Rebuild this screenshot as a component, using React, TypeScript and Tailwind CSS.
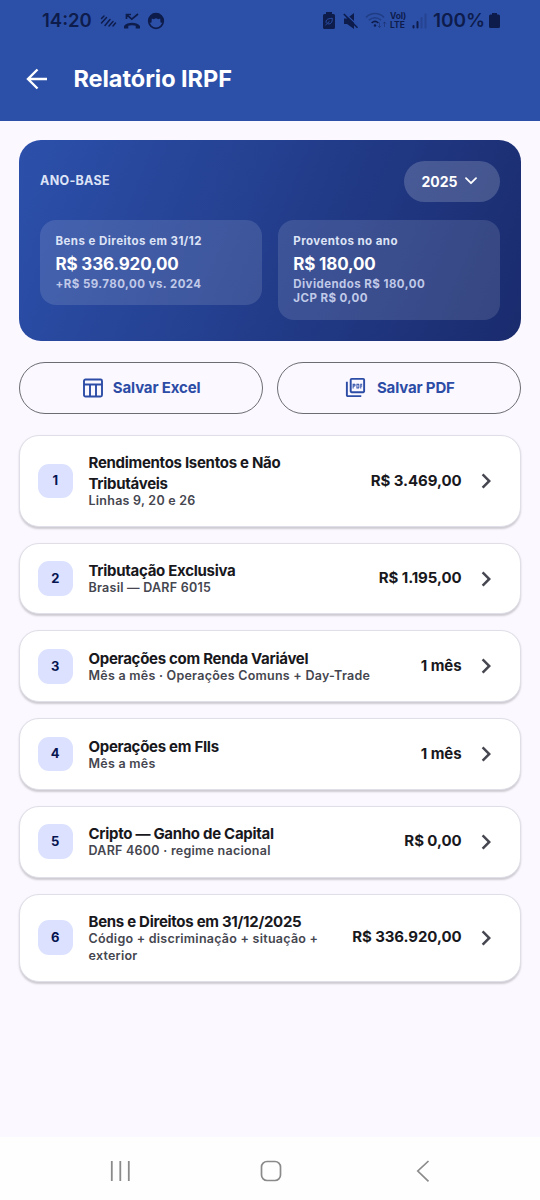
import { ReactNode } from 'react';
import { MdChevronRight, MdOutlinePictureAsPdf } from 'react-icons/md';

interface Section {
  id: number;
  title: string;
  subtitle: string;
  value: string;
}

const sections: Section[] = [
  { id: 1, title: 'Rendimentos Isentos e Não Tributáveis', subtitle: 'Linhas 9, 20 e 26', value: 'R$ 3.469,00' },
  { id: 2, title: 'Tributação Exclusiva', subtitle: 'Brasil — DARF 6015', value: 'R$ 1.195,00' },
  { id: 3, title: 'Operações com Renda Variável', subtitle: 'Mês a mês · Operações Comuns + Day-Trade', value: '1 mês' },
  { id: 4, title: 'Operações em FIIs', subtitle: 'Mês a mês', value: '1 mês' },
  { id: 5, title: 'Cripto — Ganho de Capital', subtitle: 'DARF 4600 · regime nacional', value: 'R$ 0,00' },
  { id: 6, title: 'Bens e Direitos em 31/12/2025', subtitle: 'Código + discriminação + situação + exterior', value: 'R$ 336.920,00' },
];

//Phone status bar: clock, notifications, signal and battery
function StatusBar() {
  return (
    <div className="flex h-[41px] items-center justify-between pl-[42px] pr-[40px] text-[#0e1c4c]">
      <div className="flex items-center">
        <span className="w-[50px] text-[18.5px] font-semibold whitespace-nowrap">14:20</span>
        <svg className="ml-2" width="17" height="16" viewBox="0 0 17 16" fill="none" stroke="currentColor" strokeWidth="1.5" strokeLinecap="round">
          <path d="M1.5 5.5 4 3M1.5 10 6.5 4.5M5 12.5 10 6.5M9 13 13 8.5M13 13 15.5 10" />
        </svg>
        <svg className="ml-[6px]" width="18" height="18" viewBox="0 0 18 18" fill="none" stroke="currentColor" strokeWidth="1.7">
          <path d="M3.5 7V2.5H8M3.8 2.8 8.8 7.2 15 2" />
          <path d="M1 16.5v-2.6C4.5 9.7 13.5 9.7 17 13.9v2.6h-4.3v-2.7c-2-.8-5.4-.8-7.4 0v2.7Z" fill="currentColor" stroke="none" />
        </svg>
        <svg className="ml-[6px]" width="18" height="18" viewBox="0 0 18 18" fill="none" stroke="currentColor" strokeWidth="1.7">
          <circle cx="9" cy="9" r="7.3" />
          <path d="M1.5 7C3.5-.5 14.5-.5 16.5 7l-1 4-2-.5-.3-4-1.7.7L9 6.3l-2.5.9-1.7-.7-.3 4-2 .5Z" fill="currentColor" stroke="none" />
        </svg>
      </div>

      <div className="flex items-center">
        <svg width="12" height="17" viewBox="0 0 12 17">
          <path d="M3 0h6v2h1.5A1.5 1.5 0 0 1 12 3.5V15.5A1.5 1.5 0 0 1 10.5 17h-9A1.5 1.5 0 0 1 0 15.5v-12A1.5 1.5 0 0 1 1.5 2H3Z" fill="currentColor" />
          <path d="M3.2 10.8C2.5 7.5 5 6.5 9.3 6.3c.2 3.7-1.3 6.2-4.6 5.5M2.5 13 6.5 9.3" fill="none" stroke="#2c50a8" strokeWidth="1" />
        </svg>
        <svg className="ml-[8px]" width="16" height="16" viewBox="0 0 16 16" fill="currentColor">
          <path d="M1 5.5h3L11 0v16l-7-5H1Z" />
          <path d="M1.5 0 15.5 13" stroke="#2c50a8" strokeWidth="1.2" />
          <path d="M.8 1 14.5 14.8" stroke="currentColor" strokeWidth="1.6" />
        </svg>
        <svg className="ml-[6px]" width="22" height="17" viewBox="0 0 22 17" fill="none" stroke="currentColor" strokeWidth="1.5">
          <path d="M1 5.5C6 .3 14 .3 19 5.5M3.8 8.3c3.6-3.5 8.8-3.5 12.4 0" opacity=".38" />
          <path d="M6.6 11c2-1.9 4.8-1.9 6.8 0" />
          <circle cx="10" cy="13.5" r="1.2" fill="currentColor" stroke="none" />
          <path d="M14.5 10.5v5m-1.7-1.7 1.7 1.7 1.7-1.7M19.5 15v-5m-1.7 1.7 1.7-1.7 1.7 1.7" strokeWidth="1" opacity=".4" />
        </svg>
        <div className="ml-[3px] flex w-[16px] flex-col text-[8.5px] leading-[9px] font-bold whitespace-nowrap">
          <span className="tracking-[-0.2px]">Vol)</span>
          <span>LTE</span>
        </div>
        <svg className="ml-[6px]" width="15" height="16" viewBox="0 0 15 16" fill="currentColor">
          <rect x="0.5" y="12" width="2" height="3.5" rx="1" />
          <rect x="4.5" y="8" width="2" height="7.5" rx="1" />
          <rect x="8.5" y="4" width="2" height="11.5" rx="1" opacity=".25" />
          <rect x="12.5" y="0.5" width="2" height="15" rx="1" opacity=".25" />
        </svg>
        <span className="ml-[6px] w-[54px] pt-px text-[19px] font-semibold whitespace-nowrap">100%</span>
        <svg className="ml-[2px]" width="11" height="15" viewBox="0 0 11 15" fill="currentColor">
          <path d="M3 0h5v1.5h1.5A1.5 1.5 0 0 1 11 3v10.5A1.5 1.5 0 0 1 9.5 15h-8A1.5 1.5 0 0 1 0 13.5V3a1.5 1.5 0 0 1 1.5-1.5H3Z" />
        </svg>
      </div>
    </div>
  );
}

function Header() {
  return (
    <header className="h-[121px] bg-[#2c50a8]">
      <StatusBar />
      <div className="flex h-[76px] items-center pl-[26px] text-white">
        <svg width="22" height="22" viewBox="0 0 22 22" fill="none" stroke="currentColor" strokeWidth="2.4">
          <path d="M21 11H2.5M11.5 1.5 2 11l9.5 9.5" />
        </svg>
        <h1 className="ml-[25.5px] text-[23.5px] font-bold tracking-[-0.05px]">Relatório IRPF</h1>
      </div>
    </header>
  );
}

interface SummaryBoxProps {
  label: string;
  value: string;
  children: ReactNode;
}

function SummaryBox({ label, value, children }: SummaryBoxProps) {
  return (
    <div className="flex-1 rounded-2xl bg-white/12 px-[15.5px] pt-[14px] pb-[14px] font-bold">
      <div className="text-[11.5px] leading-[15px] tracking-[0.45px] text-[#dde3f6]">{label}</div>
      <div className="mt-[4px] text-[17px] leading-[23px] tracking-[-0.15px] text-white">{value}</div>
      <div className="mt-[1px] text-[11.5px] leading-[14.3px] tracking-[0.45px] text-[#c0c9e8]">{children}</div>
    </div>
  );
}

function SummaryCard() {
  return (
    <section className="h-[201px] rounded-[22px] bg-linear-[112deg] from-[#2c50ab] to-[#1a2b6d] px-[21px] pt-[21px]">
      <div className="flex items-center justify-between">
        <span className="text-[12.5px] font-bold tracking-[0.3px] text-[#dde3f6]">ANO-BASE</span>
        <button className="flex h-[41px] w-[96px] items-center rounded-full bg-white/18 pl-[17.5px] text-[14px] font-bold text-white">
          <span className="w-[36px]">2025</span>
          <svg className="ml-[7px]" width="12" height="8" viewBox="0 0 12 8" fill="none" stroke="currentColor" strokeWidth="1.8" strokeLinecap="round" strokeLinejoin="round">
            <path d="m1 1.2 5 5 5-5" />
          </svg>
        </button>
      </div>
      <div className="mt-[18.5px] flex items-start gap-[15.5px]">
        <SummaryBox label="Bens e Direitos em 31/12" value="R$ 336.920,00">
          +R$ 59.780,00 vs. 2024
        </SummaryBox>
        <SummaryBox label="Proventos no ano" value="R$ 180,00">
          Dividendos R$ 180,00
          <br />
          JCP R$ 0,00
        </SummaryBox>
      </div>
    </section>
  );
}

function TableIcon() {
  return (
    <svg width="20" height="20" viewBox="0 0 20 20" fill="none" stroke="currentColor" strokeWidth="1.9">
      <rect x="1" y="1.5" width="18" height="17" rx="1.5" />
      <path d="M1 6.5h18M7 6.5v12M13 6.5v12" />
    </svg>
  );
}

function ExportButton({ icon, label }: { icon: ReactNode; label: string }) {
  return (
    <button className="flex h-[52px] flex-1 items-center justify-center gap-[10px] rounded-full border border-[#6c6c74] pl-px text-[15px] font-bold tracking-[-0.15px] text-[#2c4ca6]">
      {icon}
      <span className="pt-px">{label}</span>
    </button>
  );
}

function SectionCard({ section }: { section: Section }) {
  return (
    <li className="flex min-h-[71.7px] items-center rounded-[20px] border border-[#e0dfe8] bg-white py-[17px] pr-[19px] pl-[18px] shadow-[0_1.5px_2px_rgba(0,0,0,0.18)]">
      <span className="flex size-[34.5px] shrink-0 items-center justify-center rounded-[11px] bg-[#dce1ff] text-[13px] font-bold text-[#06144f]">
        {section.id}
      </span>
      <div className="ml-[16px] min-w-0 flex-1">
        <h2 className="text-[15px] leading-[20.5px] font-bold tracking-[-0.29px] text-[#18181d]">{section.title}</h2>
        <p className="-mt-[2.5px] text-[12.5px] leading-[17px] font-semibold tracking-[0.25px] text-[#45464f]">{section.subtitle}</p>
      </div>
      <span className="ml-[28px] text-[15px] font-bold tracking-[-0.08px] whitespace-nowrap text-[#18181d]">{section.value}</span>
      <MdChevronRight className="ml-[9.5px] shrink-0 text-[#45464f]" size={30} />
    </li>
  );
}

//Android navigation buttons
function NavigationBar() {
  return (
    <nav className="flex h-[63px] items-center bg-[#fefefe] pt-[4px] pl-[110px] text-[#8a8a8a]">
      <svg width="21" height="22" viewBox="0 0 21 22" stroke="currentColor" strokeWidth="1.8">
        <path d="M1.8 1v20M10.3 1v20M18.8 1v20" />
      </svg>
      <svg className="ml-[129px]" width="22" height="22" viewBox="0 0 22 22" fill="none" stroke="currentColor" strokeWidth="1.7">
        <rect x="1.5" y="1.5" width="19" height="19" rx="5.5" />
      </svg>
      <svg className="ml-[134px]" width="14" height="22" viewBox="0 0 14 22" fill="none" stroke="currentColor" strokeWidth="1.7">
        <path d="M12.5 1 1.8 11l10.7 10.3" />
      </svg>
    </nav>
  );
}

export default function App() {
  return (
    <div className="flex h-[1200px] w-[540px] flex-col bg-[#fbf8ff] font-['Inter','Liberation_Sans',sans-serif]">
      <Header />
      <main className="flex-1 px-[19px] pt-[18.6px]">
        <SummaryCard />
        <div className="mt-[21px] flex gap-[13.5px]">
          <ExportButton icon={<TableIcon />} label="Salvar Excel" />
          <ExportButton icon={<MdOutlinePictureAsPdf size={23} />} label="Salvar PDF" />
        </div>
        <ul className="mt-[21.7px] flex flex-col gap-[16px]">
          {sections.map((section) => (
            <SectionCard key={section.id} section={section} />
          ))}
        </ul>
      </main>
      <NavigationBar />
    </div>
  );
}
